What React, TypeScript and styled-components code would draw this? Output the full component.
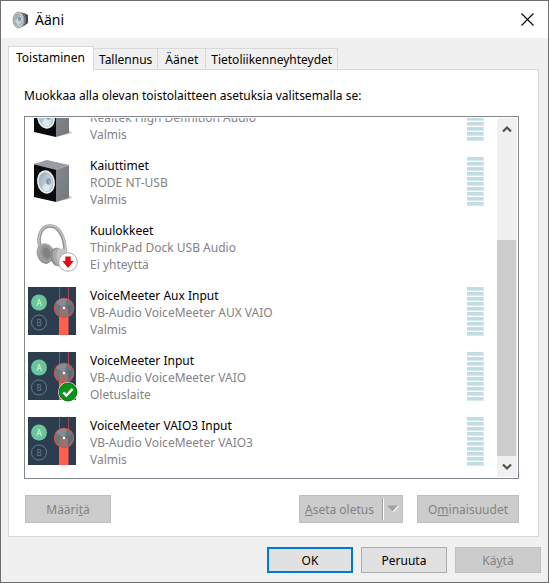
import React from "react";
import styled, { createGlobalStyle, css } from "styled-components";

const Global = createGlobalStyle`
  *, *::before, *::after { box-sizing: border-box; }
  body { margin: 0; background: #f0f0f0; }
  body, button { font-family: "Noto Sans", "Segoe UI", sans-serif; font-size: 12px; line-height: 17px; }
`;

const Dialog = styled.div`
  display: flex;
  flex-direction: column;
  height: 100vh;
  min-height: 360px;
  border: 1px solid #6e6e6e;
  background: #f0f0f0;
  color: #000;
`;

const TitleBar = styled.header`
  display: flex;
  align-items: center;
  gap: 6px;
  height: 37px;
  padding: 0 11px;
  background: #fff;
  flex: none;
`;

const Title = styled.h1`
  flex: 1;
  margin: 0;
  font-size: 14px;
  line-height: 20px;
  font-weight: 400;
`;

const CloseButton = styled.button`
  display: grid;
  place-items: center;
  width: 20px;
  height: 20px;
  padding: 0;
  border: 0;
  background: none;
`;

const Main = styled.main`
  display: flex;
  flex-direction: column;
  flex: 1;
  min-height: 0;
  padding: 8px 9px 0 7px;
`;

const TabList = styled.div`
  display: flex;
  align-items: flex-end;
  flex: none;
  height: 23px;
`;

const Tab = styled.button<{ $active?: boolean; $wide?: boolean }>`
  height: 21px;
  padding: ${(p) => (p.$wide ? "0 7px" : "0 5px")};
  border: 1px solid #d9d9d9;
  border-left: 0;
  border-bottom: 0;
  background: #f0f0f0;
  color: #000;
  white-space: nowrap;
  ${(p) =>
    p.$active &&
    css`
      height: 24px;
      margin-bottom: -1px;
      padding: 0 8px 2px 7px;
      border-left: 1px solid #d9d9d9;
      background: #fff;
      z-index: 1;
    `}
`;

const Panel = styled.section`
  display: flex;
  flex-direction: column;
  flex: 1;
  min-height: 0;
  padding: 17px 19px 13px 15px;
  border: 1px solid #d9d9d9;
  background: #fff;
`;

const Instruction = styled.p`
  margin: 0 0 12px;
`;

const ListFrame = styled.div`
  display: flex;
  flex: 1;
  min-height: 0;
  padding: 1px;
  border: 1px solid #828790;
`;

const DeviceList = styled.ul`
  display: flex;
  flex-direction: column;
  justify-content: flex-end;
  gap: 14px;
  flex: 1;
  min-width: 0;
  margin: 0;
  padding: 0 13px 9px 2px;
  overflow: hidden;
  list-style: none;
`;

const Device = styled.li`
  display: flex;
  flex: none;
  align-items: flex-start;
`;

const IconBox = styled.div`
  position: relative;
  width: 48px;
  height: 48px;
  margin-right: 14px;
  flex: none;
  svg { display: block; }
`;

const Badge = styled.span`
  position: absolute;
  right: -2px;
  bottom: -2px;
`;

const DeviceText = styled.div`
  flex: 1;
  min-width: 0;
  color: #838383;
  white-space: nowrap;
`;

const DeviceName = styled.div`
  color: #000;
`;

const Meter = styled.div`
  display: flex;
  flex-direction: column;
  gap: 1px;
  width: 17px;
  flex: none;
`;

const MeterBar = styled.span`
  height: 4px;
  background: #c2dce4;
  border-right: 1px solid #d5e8ed;
  border-bottom: 1px solid #d9eaef;
`;

const ScrollBar = styled.div`
  display: flex;
  flex-direction: column;
  width: 20px;
  background: #f0f0f0;
  flex: none;
`;

const ScrollButton = styled.button`
  display: grid;
  place-items: center;
  height: 21px;
  padding: 0;
  border: 0;
  background: none;
  flex: none;
`;

const ScrollTrack = styled.div`
  display: flex;
  flex-direction: column;
  justify-content: flex-end;
  flex: 1;
`;

const ScrollThumb = styled.div`
  height: 68%;
  margin-right: 1px;
  background: #cdcdcd;
`;

const Actions = styled.div`
  display: flex;
  gap: 14px;
  margin: 16px 0 0 1px;
  flex: none;
`;

const Button = styled.button<{ $default?: boolean }>`
  min-width: 86px;
  height: 26px;
  padding: 0 10px;
  border: 1px solid #adadad;
  background: #e1e1e1;
  color: #000;
  white-space: nowrap;
  ${(p) => p.$default && css`border: 2px solid #0078d7;`}
  &:disabled {
    border-color: #bfbfbf;
    background: #cccccc;
    color: #838383;
  }
`;

const PanelButton = styled(Button)`
  height: 28px;
`;

const FirstAction = styled(PanelButton)`
  margin-right: auto;
`;

const SplitButton = styled(PanelButton)`
  display: flex;
  align-items: center;
  padding: 0 2px 0 5px;
`;

const SplitMark = styled.span`
  display: grid;
  place-items: center;
  height: 22px;
  margin-left: 8px;
  padding: 0 1px 0 3px;
  border-left: 1px solid #a0a0a0;
  box-shadow: inset 1px 0 0 #fff;
`;

const Footer = styled.footer`
  display: flex;
  justify-content: flex-end;
  gap: 8px;
  padding: 10px 7px 9px;
  flex: none;
`;

const SoundIcon = () => (
  <svg width="17" height="18" viewBox="0 0 17 18" aria-hidden="true">
    <path d="M6 1l6 1 4 2v8l-4 3-5 2z" fill="#45494b" />
    <path d="M11 2l2 3v7l-2 3" fill="none" stroke="#8b9092" />
    <ellipse cx="6.5" cy="9" rx="5.5" ry="8" fill="#c4c8ca" stroke="#9da2a5" />
    <ellipse cx="6" cy="9" rx="4.3" ry="6.6" fill="#9fb0b8" />
    <path d="M3 10l6-6 1 5-3 6z" fill="#c8dae2" />
    <ellipse cx="7.6" cy="8" rx="1.6" ry="2.2" fill="#8599a3" />
  </svg>
);

const SpeakerIcon = () => (
  <svg width="48" height="48" viewBox="0 0 48 48" aria-hidden="true">
    <defs>
      <linearGradient id="speakerSide" x1="0" y1="0" x2="1" y2="1">
        <stop offset="0" stopColor="#85888d" />
        <stop offset="1" stopColor="#74777d" />
      </linearGradient>
      <linearGradient id="speakerCone" x1="0" y1="0" x2="1" y2="1">
        <stop offset="0" stopColor="#8ba0ac" />
        <stop offset=".5" stopColor="#bccdd6" />
        <stop offset="1" stopColor="#dfeaee" />
      </linearGradient>
    </defs>
    <path d="M28 45l17-4-4-3z" fill="#d4d4d4" />
    <path d="M6 7l13-4 22 5-13 5z" fill="#999ca0" />
    <path d="M28 12.500l13-4.500v33l-13 4z" fill="url(#speakerSide)" />
    <path d="M6 7l22 5.500v32.500L6 40z" fill="#090b0c" />
    <path d="M6 7l22 5.500M28 12.500L41 8" fill="none" stroke="#b4b7ba" strokeWidth=".6" />
    <ellipse cx="18" cy="25" rx="8" ry="10.800" transform="rotate(-10 18 25)" fill="url(#speakerCone)" stroke="#eef1f2" strokeWidth="1.800" />
    <ellipse cx="18" cy="25" rx="6.800" ry="9.600" transform="rotate(-10 18 25)" fill="none" stroke="#a3b1b8" strokeWidth=".7" />
    <path d="M14 31l5-7 3 4-1 6-4 .500z" fill="#dce8ed" />
    <ellipse cx="20.500" cy="24.500" rx="2.500" ry="3.200" fill="#849aa7" />
    <path d="M20 23l3 2-1 3z" fill="#aabdc7" />
  </svg>
);

const HeadphonesIcon = () => (
  <svg width="48" height="48" viewBox="0 0 48 48" aria-hidden="true">
    <defs>
      <linearGradient id="cupShade" x1="0" y1="0" x2="1" y2="1">
        <stop offset="0" stopColor="#b2b2b2" />
        <stop offset="1" stopColor="#838383" />
      </linearGradient>
    </defs>
    <path d="M12 25C9 13 14 4 22 4c9 0 15 11 15 26" fill="none" stroke="#929292" strokeWidth="3.500" />
    <path d="M11.500 24C9 13 14 3.500 22 3.500c9 0 15.500 11 15.500 26" fill="none" stroke="#c5c5c5" strokeWidth="1.500" />
    <path d="M10 24c5-5 12-3 15 3v11l-6 4c-8 0-13-10-9-18z" fill="url(#cupShade)" />
    <ellipse cx="18" cy="31" rx="6" ry="8.500" transform="rotate(-14 18 31)" fill="#939393" stroke="#a8a8a8" />
    <ellipse cx="18.500" cy="31" rx="3.500" ry="5.500" transform="rotate(-14 18.500 31)" fill="#808080" />
    <ellipse cx="28" cy="35" rx="5.500" ry="9" transform="rotate(-10 28 35)" fill="#8c8c8c" />
    <ellipse cx="30" cy="35" rx="5.500" ry="9" transform="rotate(-10 30 35)" fill="#ababab" stroke="#8e8e8e" strokeWidth=".7" />
    <path d="M30 27c5-2 10 1 10 8l-5 8h-4c-3-5-3-11-1-16z" fill="#c4c4c4" />
  </svg>
);

const MixerIcon = () => (
  <svg width="48" height="48" viewBox="0 0 48 48" aria-hidden="true">
    <path d="M0 0h48v48H0z" fill="#2c3d4f" />
    <path d="M31.5 0v48M40.5 0v48" stroke="#a64849" />
    <path d="M31 21h9v27h-9z" fill="#ff604c" />
    <circle cx="11" cy="15.5" r="8" fill="#6bc59b" />
    <circle cx="11" cy="35.5" r="7.500" fill="#2a3b4d" stroke="#61818a" />
    <text x="11" y="18.5" textAnchor="middle" fontFamily="Noto Sans, sans-serif" fontSize="8" fill="#e5faf0">A</text>
    <text x="11" y="38.5" textAnchor="middle" fontFamily="Noto Sans, sans-serif" fontSize="8" fill="#60818b">B</text>
    <circle cx="36" cy="21" r="9.600" fill="#6b7880" stroke="#d94e45" strokeWidth="1.200" />
    <path d="M36 21l-8-5a9 9 0 0 1 11-4z" fill="#858c92" />
    <path d="M36 21l8-4a9 9 0 0 1-5 12z" fill="#5c6b75" />
    <path d="M32 21h8v8a9 9 0 0 1-8 0z" fill="#99716f" />
    <circle cx="36" cy="21" r="1.3" fill="#fff" />
  </svg>
);

const DisconnectedBadge = () => (
  <svg width="20" height="20" viewBox="0 0 20 20" aria-hidden="true">
    <circle cx="10" cy="10" r="9.3" fill="#fff" stroke="#aaa" />
    <path d="M7.300 4.500h5.400v4.500h3L10 16 4.300 9h3z" fill="#e20b16" />
  </svg>
);

const DefaultBadge = () => (
  <svg width="20" height="20" viewBox="0 0 20 20" aria-hidden="true">
    <circle cx="10" cy="10" r="10" fill="#e7efe7" />
    <circle cx="10" cy="10" r="8.9" fill="#0b9417" stroke="#087312" />
    <path d="M5.3 10.3l3.1 3.2 6.2-6.6" fill="none" stroke="#fff" strokeWidth="2.4" />
  </svg>
);

type Kind = "speaker" | "headphones" | "mixer";
interface DeviceInfo {
  name: string;
  driver: string;
  status: string;
  kind: Kind;
  badge?: "disconnected" | "default";
}

const icons: Record<Kind, React.FC> = {
  speaker: SpeakerIcon,
  headphones: HeadphonesIcon,
  mixer: MixerIcon,
};

const devices: DeviceInfo[] = [
  { name: "Kaiuttimet", driver: "Realtek High Definition Audio", status: "Valmis", kind: "speaker" },
  { name: "Kaiuttimet", driver: "RODE NT-USB", status: "Valmis", kind: "speaker" },
  { name: "Kuulokkeet", driver: "ThinkPad Dock USB Audio", status: "Ei yhteyttä", kind: "headphones", badge: "disconnected" },
  { name: "VoiceMeeter Aux Input", driver: "VB-Audio VoiceMeeter AUX VAIO", status: "Valmis", kind: "mixer" },
  { name: "VoiceMeeter Input", driver: "VB-Audio VoiceMeeter VAIO", status: "Oletuslaite", kind: "mixer", badge: "default" },
  { name: "VoiceMeeter VAIO3 Input", driver: "VB-Audio VoiceMeeter VAIO3", status: "Valmis", kind: "mixer" },
];

const DeviceRow = ({ device }: { device: DeviceInfo }) => {
  const Icon = icons[device.kind];
  return (
    <Device>
      <IconBox>
        <Icon />
        {device.badge && (
          <Badge>{device.badge === "default" ? <DefaultBadge /> : <DisconnectedBadge />}</Badge>
        )}
      </IconBox>
      <DeviceText>
        <DeviceName>{device.name}</DeviceName>
        <div>{device.driver}</div>
        <div>{device.status}</div>
      </DeviceText>
      {device.badge !== "disconnected" && (
        <Meter>
          {Array.from({ length: 10 }, (_, i) => (
            <MeterBar key={i} />
          ))}
        </Meter>
      )}
    </Device>
  );
};

export default function App() {
  return (
    <>
      <Global />
      <Dialog role="dialog" aria-labelledby="dialog-title">
        <TitleBar>
          <SoundIcon />
          <Title id="dialog-title">Ääni</Title>
          <CloseButton aria-label="Sulje">
            <svg width="13" height="13" viewBox="0 0 13 13" aria-hidden="true">
              <path d="M.5.5l12 12M12.5.5l-12 12" stroke="#000" strokeWidth="1.1" />
            </svg>
          </CloseButton>
        </TitleBar>
        <Main>
          <TabList role="tablist">
            <Tab role="tab" aria-selected="true" $active>Toistaminen</Tab>
            <Tab role="tab" aria-selected="false">Tallennus</Tab>
            <Tab role="tab" aria-selected="false" $wide>Äänet</Tab>
            <Tab role="tab" aria-selected="false">Tietoliikenneyhteydet</Tab>
          </TabList>
          <Panel role="tabpanel">
            <Instruction>Muokkaa alla olevan toistolaitteen asetuksia valitsemalla se:</Instruction>
            <ListFrame>
              <DeviceList>
                {devices.map((device, i) => (
                  <DeviceRow key={i} device={device} />
                ))}
              </DeviceList>
              <ScrollBar>
                <ScrollButton aria-label="Vieritä ylös">
                  <svg width="10" height="8" viewBox="0 0 10 8" aria-hidden="true">
                    <path d="M1 6.5l4-4 4 4" fill="none" stroke="#505050" strokeWidth="2.2" />
                  </svg>
                </ScrollButton>
                <ScrollTrack>
                  <ScrollThumb />
                </ScrollTrack>
                <ScrollButton aria-label="Vieritä alas">
                  <svg width="10" height="8" viewBox="0 0 10 8" aria-hidden="true">
                    <path d="M1 1.5l4 4 4-4" fill="none" stroke="#505050" strokeWidth="2.2" />
                  </svg>
                </ScrollButton>
              </ScrollBar>
            </ListFrame>
            <Actions>
              <FirstAction disabled>Määri<u>t</u>ä</FirstAction>
              <SplitButton disabled>
                <span><u>A</u>seta oletus</span>
                <SplitMark>
                  <svg width="13" height="8" viewBox="0 0 13 8" aria-hidden="true">
                    <path d="M2 1h11L7.500 7.500z" fill="#fff" />
                    <path d="M1 0.500h11L6.500 6.500z" fill="#a0a0a0" />
                  </svg>
                </SplitMark>
              </SplitButton>
              <PanelButton disabled>O<u>m</u>inaisuudet</PanelButton>
            </Actions>
          </Panel>
        </Main>
        <Footer>
          <Button $default>OK</Button>
          <Button>Peruuta</Button>
          <Button disabled>Kä<u>y</u>tä</Button>
        </Footer>
      </Dialog>
    </>
  );
}
